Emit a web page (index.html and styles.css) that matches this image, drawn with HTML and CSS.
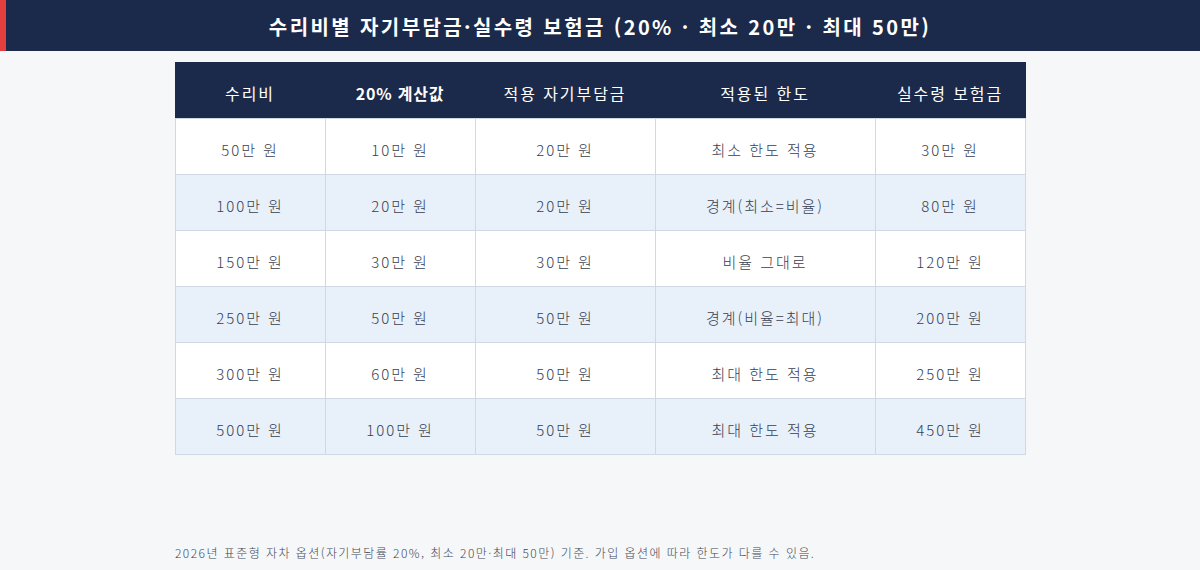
FILE: index.html
```html
<!DOCTYPE html>
<html lang="ko">
<head>
<meta charset="utf-8">
<link rel="stylesheet" href="styles.css">
</head>
<body>
<header class="title-bar">
  <h1 class="title">수리비별 자기부담금·실수령 보험금 (20% · 최소 20만 · 최대 50만)</h1>
</header>
<main class="content">
  <table class="grid">
    <colgroup>
      <col class="c1"><col class="c2"><col class="c3"><col class="c4"><col class="c5">
    </colgroup>
    <thead>
      <tr>
        <th>수리비</th>
        <th class="strong">20% 계산값</th>
        <th>적용 자기부담금</th>
        <th>적용된 한도</th>
        <th>실수령 보험금</th>
      </tr>
    </thead>
    <tbody>
      <tr><td>50만 원</td><td>10만 원</td><td>20만 원</td><td>최소 한도 적용</td><td>30만 원</td></tr>
      <tr><td>100만 원</td><td>20만 원</td><td>20만 원</td><td>경계(최소=비율)</td><td>80만 원</td></tr>
      <tr><td>150만 원</td><td>30만 원</td><td>30만 원</td><td>비율 그대로</td><td>120만 원</td></tr>
      <tr><td>250만 원</td><td>50만 원</td><td>50만 원</td><td>경계(비율=최대)</td><td>200만 원</td></tr>
      <tr><td>300만 원</td><td>60만 원</td><td>50만 원</td><td>최대 한도 적용</td><td>250만 원</td></tr>
      <tr><td>500만 원</td><td>100만 원</td><td>50만 원</td><td>최대 한도 적용</td><td>450만 원</td></tr>
    </tbody>
  </table>
  <p class="note">2026년 표준형 자차 옵션(자기부담률 20%, 최소 20만·최대 50만) 기준. 가입 옵션에 따라 한도가 다를 수 있음.</p>
</main>
</body>
</html>
```
FILE: styles.css
```css
* { box-sizing: border-box; }
html, body { margin: 0; padding: 0; }
body {
  width: 1200px;
  height: 570px;
  background: #f6f7f9;
  font-family: "Noto Sans CJK KR", "Noto Sans", sans-serif;
  color: #3b4252;
  overflow: hidden;
}
.title-bar {
  height: 51px;
  background: #1b2a4a;
  border-left: 6px solid #e53e3e;
  display: flex;
  align-items: center;
  justify-content: center;
}
.title {
  margin: 0;
  font-size: 20px;
  font-weight: 700;
  color: #ffffff;
  line-height: 1;
  letter-spacing: 0.12em;
  padding: 3px 6px 0 0;
}
.content {
  display: flex;
  flex-direction: column;
  align-items: center;
}
.grid {
  margin-top: 11px;
  width: 850px;
  table-layout: fixed;
  border-collapse: collapse;
}
.c1 { width: 150px; }
.c2 { width: 150px; }
.c3 { width: 180px; }
.c4 { width: 220px; }
.c5 { width: 150px; }
.grid th {
  height: 56px;
  background: #1b2a4a;
  color: #ffffff;
  font-size: 16px;
  font-weight: 400;
  letter-spacing: 0.12em;
  padding: 4px 0 0;
  border: 1px solid #1b2a4a;
  border-bottom-color: #cfd8e3;
}
.grid th.strong { font-weight: 700; letter-spacing: 0.05em; }
.grid td {
  height: 56px;
  text-align: center;
  font-size: 15px;
  font-weight: 300;
  letter-spacing: 0.13em;
  color: #374151;
  border: 1px solid #cfd8e3;
  padding: 5px 0 0;
  background: #ffffff;
}
.grid tbody tr:nth-child(even) td { background: #e8f0fa; }
.note {
  align-self: flex-start;
  margin: 89px 0 0 175px;
  font-size: 12px;
  font-weight: 300;
  letter-spacing: 0.12em;
  color: #3f4756;
}
```
